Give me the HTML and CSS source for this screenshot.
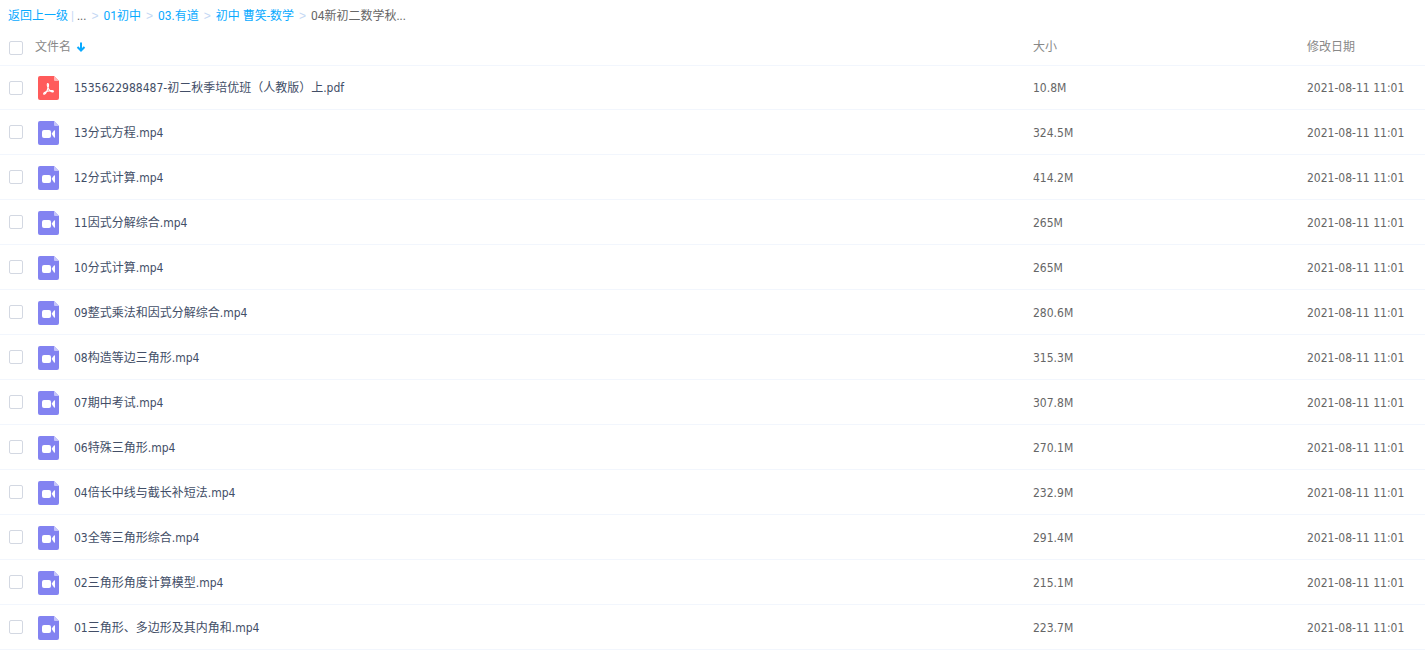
FILE: index.html
```html
<!DOCTYPE html>
<html lang="zh-CN">
<head>
<meta charset="utf-8">
<title>04新初二数学秋</title>
<link rel="stylesheet" href="styles.css">
</head>
<body>
<svg class="sprite" aria-hidden="true">
  <symbol id="video" viewBox="0 0 21 24">
    <path fill="#8383f1" d="M2 0h14l5 5v17a2 2 0 0 1-2 2H2a2 2 0 0 1-2-2V2a2 2 0 0 1 2-2z"/>
    <path fill="#c5c5fa" d="M16 0l5 5h-4a1 1 0 0 1-1-1z"/>
    <rect fill="#fff" x="4" y="9" width="9" height="8" rx="2"/>
    <path fill="#fff" d="M13.600 12.800L16 9.500Q17 9 17 10v6Q17 17 16 16.500z"/>
  </symbol>
  <symbol id="pdf" viewBox="0 0 21 24">
    <path fill="#ff5b5b" d="M2 0h14l5 5v17a2 2 0 0 1-2 2H2a2 2 0 0 1-2-2V2a2 2 0 0 1 2-2z"/>
    <path fill="#ffb5b5" d="M16 0l5 5h-4a1 1 0 0 1-1-1z"/>
    <path fill="none" stroke="#fff" stroke-width="1.1" stroke-linecap="round" stroke-linejoin="round" d="M9.700 7.500c1.200 0 1 2 .4 4-.7 2.500-2 5.700-3.400 6.600-1 .5-1.500-.5-.5-1.300 2-1.600 5-2.300 7.800-2.200 1.900.1 1.800 1.500.4 1.400-2-.2-4.600-3.400-5-6-.2-1.300-.2-2.500.3-2.500z"/>
  </symbol>
</svg>
<nav class="crumbs" aria-label="路径">
  <a href="#">返回上一级</a><span class="bar">|</span><span>...</span><span class="sep">&gt;</span><a href="#">01初中</a><span class="sep">&gt;</span><a href="#">03.有道</a><span class="sep">&gt;</span><a href="#">初中 曹笑-数学</a><span class="sep">&gt;</span><span>04新初二数学秋...</span>
</nav>
<table class="files">
  <colgroup><col class="c-check"><col class="c-icon"><col><col class="c-size"><col class="c-date"></colgroup>
  <thead>
    <tr>
      <th class="check"><input type="checkbox" aria-label="全选"></th>
      <th class="title" colspan="2"><span class="sort">文件名<svg class="arrow" viewBox="0 0 10 10" aria-hidden="true"><path d="M5 0.500V8.500M1.500 5L5 8.500L8.500 5" fill="none" stroke="#09aaff" stroke-width="2"/></svg></span></th>
      <th>大小</th>
      <th>修改日期</th>
    </tr>
  </thead>
  <tbody id="rows"></tbody>
</table>
<script src="files.js"></script>
</body>
</html>
```

FILE: styles.css
```css
body {
  margin: 0;
  background: #fff;
  color: #424e67;
  font: 12px/24px "DejaVu Sans Condensed", "Noto Sans", "Noto Sans CJK SC", sans-serif;
}

.sprite {
  display: none;
}

.crumbs {
  display: flex;
  height: 32px;
  padding-left: 8px;
  color: #666;
  font-family: Roboto, "Noto Sans CJK SC", sans-serif;
  line-height: 33px;
  white-space: nowrap;
}

.crumbs a {
  color: #09aaff;
  text-decoration: none;
}

.crumbs .bar {
  margin: 0 3px;
  color: #c4d8f4;
}

.crumbs .sep {
  margin: 0 5px;
  color: #c4d8f4;
  font-family: "Liberation Sans", sans-serif;
}

.files {
  width: 100%;
  table-layout: fixed;
  border-collapse: separate;
  border-spacing: 0;
}

.c-check {
  width: 34px;
}

.c-icon {
  width: 40px;
}

.c-size {
  width: 274px;
}

.c-date {
  width: 118px;
}

.files th,
.files td {
  padding: 11px 0 9px;
  border-bottom: 1px solid #f2f6fd;
  text-align: left;
  vertical-align: middle;
  white-space: nowrap;
}

.files th {
  padding: 3px 0 6px;
  color: #888;
  font-weight: normal;
}

.files tbody tr:first-child td {
  padding-top: 10px;
}

.files td.check,
.files tbody tr:first-child td.check {
  padding: 9px 0 9px 9px;
}

.files th.check {
  padding: 5px 0 6px 9px;
}

.files th.title {
  padding-left: 1px;
}

.files .name {
  overflow: hidden;
  text-overflow: ellipsis;
}

.files .meta {
  color: #666;
}

.check input {
  display: block;
  width: 14px;
  height: 14px;
  margin: 0;
  appearance: none;
  border: 1px solid #d3d8e2;
  border-radius: 2px;
  background: #fff;
}

.check input:checked {
  background: #09aaff;
}

.sort {
  display: flex;
  align-items: center;
  gap: 5px;
}

.arrow {
  width: 10px;
  height: 10px;
}

.icon {
  display: block;
  width: 21px;
  height: 24px;
  margin-left: 4px;
}
```

FILE: files.js
```javascript
const files = [
  ["1535622988487-初二秋季培优班（人教版）上.pdf", "10.8M"],
  ["13分式方程.mp4", "324.5M"],
  ["12分式计算.mp4", "414.2M"],
  ["11因式分解综合.mp4", "265M"],
  ["10分式计算.mp4", "265M"],
  ["09整式乘法和因式分解综合.mp4", "280.6M"],
  ["08构造等边三角形.mp4", "315.3M"],
  ["07期中考试.mp4", "307.8M"],
  ["06特殊三角形.mp4", "270.1M"],
  ["04倍长中线与截长补短法.mp4", "232.9M"],
  ["03全等三角形综合.mp4", "291.4M"],
  ["02三角形角度计算模型.mp4", "215.1M"],
  ["01三角形、多边形及其内角和.mp4", "223.7M"]
];

document.getElementById("rows").innerHTML = files.map(([name, size], i) => `
  <tr>
    <td class="check"><input type="checkbox" id="file-${i}"></td>
    <td><svg class="icon" aria-hidden="true"><use href="#${name.endsWith(".pdf") ? "pdf" : "video"}"/></svg></td>
    <td class="name"><label for="file-${i}">${name}</label></td>
    <td class="meta">${size}</td>
    <td class="meta">2021-08-11 11:01</td>
  </tr>`).join("");
```
